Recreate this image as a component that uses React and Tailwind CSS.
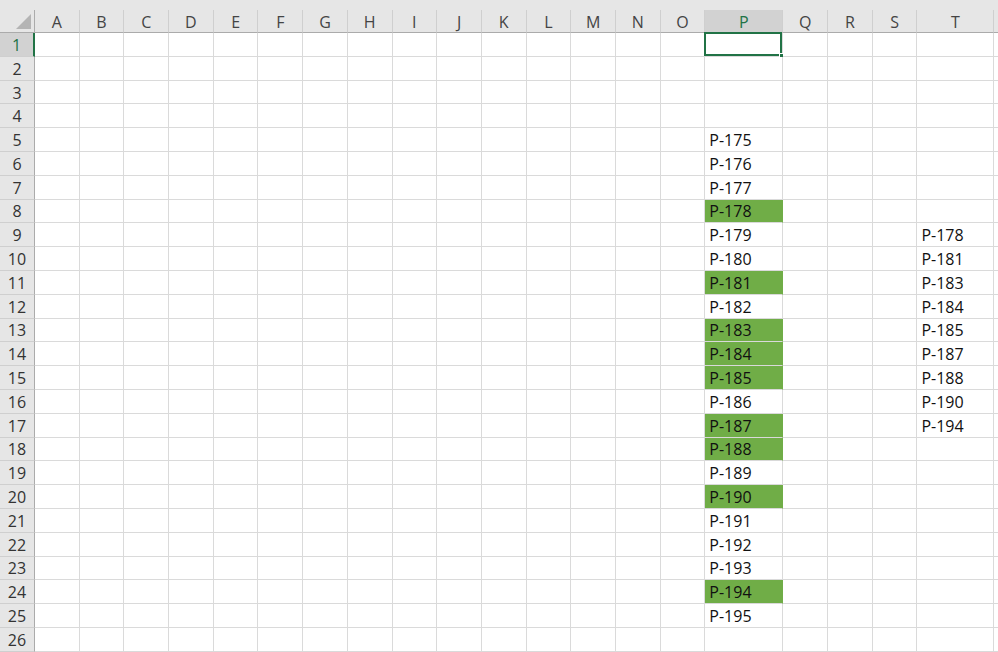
import React from "react";

const COLS = ["A", "B", "C", "D", "E", "F", "G", "H", "I", "J", "K", "L", "M", "N", "O", "P", "Q", "R", "S", "T", ""];
const GREEN = [178, 181, 183, 184, 185, 187, 188, 190, 194];
const ROWS = Array.from({ length: 26 }, (_, i) => i + 1);

function cellValue(row, col) {
  if (col === "P" && row >= 5 && row <= 25) return "P-" + (170 + row);
  if (col === "T" && row >= 9 && row <= 17) return "P-" + GREEN[row - 9];
  return "";
}

function isGreen(row, col) {
  return col === "P" && row >= 5 && row <= 25 && GREEN.includes(170 + row);
}

function Corner() {
  return (
    <div className="relative border-r border-b border-r-[#ababab] border-b-[#ababab] bg-[#e6e6e6]">
      <svg className="absolute right-[3px] bottom-[3px]" width="15" height="15" viewBox="0 0 15 15">
        <polygon points="15,0 15,15 0,15" fill="#b4b4b4" />
      </svg>
    </div>
  );
}

function ColHead({ label }) {
  const selected = label === "P";
  return (
    <div
      className={
        "flex items-center justify-center border-r border-b border-r-[#cfcfcf] border-b-[#ababab] pt-[1px] text-[16px] " +
        (selected ? "bg-[#d2d2d2] text-[#217346]" : "bg-[#e6e6e6] text-[#444]")
      }
    >
      {label}
    </div>
  );
}

function RowHead({ n }) {
  const selected = n === 1;
  return (
    <div
      className={
        "flex items-center justify-center border-b border-b-[#cfcfcf] pt-[1px] text-[16px] " +
        (selected
          ? "bg-[#d2d2d2] text-[#217346] border-r-2 border-r-[#217346]"
          : "bg-[#e6e6e6] text-[#333] border-r border-r-[#ababab]")
      }
    >
      {n}
    </div>
  );
}

function Cell({ row, col }) {
  const green = isGreen(row, col);
  const selected = row === 1 && col === "P";
  return (
    <div
      className={
        "relative flex items-center overflow-visible whitespace-nowrap pl-[4px] pt-[1px] text-[16px] text-[#111] border-r border-b " +
        (green ? "bg-[#70ad47] border-[#70ad47] border-b-[#d9d9d9]" : "bg-white border-[#dadada]")
      }
    >
      {cellValue(row, col)}
      {selected && (
        <>
          <div className="absolute -top-[1px] -left-[1px] right-0 bottom-0 border-2 border-[#217346]" />
          <div className="absolute -right-[4px] -bottom-[4px] h-[7px] w-[7px] border border-white bg-[#217346]" />
        </>
      )}
    </div>
  );
}

export default function App() {
  return (
    <div
      className="h-[652px] w-[998px] overflow-hidden bg-white"
      style={{ fontFamily: '"Open Sans", "Liberation Sans", sans-serif' }}
    >
      <div className="h-[10px] bg-[#e6e6e6]" />
      <div className="grid grid-cols-[35px_repeat(15,44.7px)_78px_repeat(3,44.7px)_77px_1fr] grid-rows-[23px_repeat(26,23.8px)]">
        <Corner />
        {COLS.map((c, i) => (
          <ColHead key={"h" + i} label={c} />
        ))}
        {ROWS.map((r) => (
          <React.Fragment key={r}>
            <RowHead n={r} />
            {COLS.map((c, i) => (
              <Cell key={r + "-" + i} row={r} col={c} />
            ))}
          </React.Fragment>
        ))}
      </div>
    </div>
  );
}
